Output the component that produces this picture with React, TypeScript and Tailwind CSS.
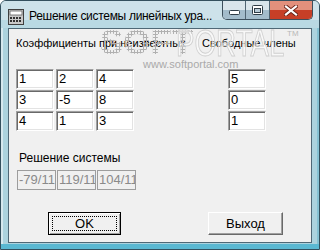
import React from "react";

const coeffs = [
  ["1", "2", "4"],
  ["3", "-5", "8"],
  ["4", "1", "3"],
];
const free = ["5", "0", "1"];
const result = ["-79/115", "119/115", "104/115"];

function Field({ value }: { value: string }) {
  return (
    <div className="h-[20px] w-[38px] overflow-hidden whitespace-nowrap border border-[#a0a0a0] border-b-white border-r-white bg-white pl-[2px] text-[13px] leading-[18px] text-black shadow-[inset_1px_1px_0_#696969,inset_-1px_-1px_0_#e3e3e3]">
      {value}
    </div>
  );
}

function ResultField({ value }: { value: string }) {
  return (
    <div className="h-[20px] w-[39px] overflow-hidden whitespace-nowrap border border-[#9d9d9d] bg-[#f0f0f0] pl-[1px] text-[13px] leading-[18px] text-[#8a8a8a]">
      {value}
    </div>
  );
}

function AppIcon() {
  return (
    <svg width="16" height="16" viewBox="0 0 16 16">
      <rect x="0.5" y="0.5" width="15" height="15" fill="#c8c8c8" stroke="#404040" />
      <rect x="2" y="2" width="12" height="4" fill="#fff" stroke="#606060" strokeWidth="0.8" />
      {[0, 1, 2, 3].map((c) =>
        [0, 1].map((r) => (
          <rect key={`${c}-${r}`} x={2 + c * 3} y={8 + r * 3} width="2" height="2" fill="#303030" />
        ))
      )}
    </svg>
  );
}

// caption button glyphs
function MinGlyph() {
  return (
    <svg width="13" height="12" viewBox="0 0 13 12">
      <rect x="1.5" y="6.5" width="10" height="4" rx="1" fill="#fff" stroke="#2f3d47" />
    </svg>
  );
}

function MaxGlyph() {
  return (
    <svg width="13" height="12" viewBox="0 0 13 12">
      <rect x="1.5" y="1.5" width="10" height="9" rx="1" fill="#fff" stroke="#2f3d47" />
      <rect x="3.5" y="4.5" width="6" height="4" fill="#b7cad6" stroke="#2f3d47" />
    </svg>
  );
}

function CloseX() {
  return (
    <svg width="14" height="11" viewBox="0 0 14 11">
      <path d="M2 1.5 L12 9.5 M12 1.5 L2 9.5" stroke="#6b2418" strokeWidth="4" strokeLinecap="square" />
      <path d="M2 1.5 L12 9.5 M12 1.5 L2 9.5" stroke="#fff" strokeWidth="2.2" strokeLinecap="square" />
    </svg>
  );
}

export default function App() {
  return (
    <div className="flex h-[250px] w-[320px] flex-col overflow-hidden rounded-t-[6px] border border-[#34505e] bg-[#acd3de] font-['Liberation_Sans',Arial,sans-serif] shadow-[inset_0_-5px_0_#5ab8d2,inset_2px_0_0_#d6e8ee,inset_-2px_0_0_#86c2d3]">
      {/* title bar */}
      <div className="flex h-[27px] shrink-0 items-start bg-[#cde2ea] shadow-[inset_0_-8px_0_#b9d9e3]">
        <div className="ml-[7px] mt-[8px] shrink-0">
          <AppIcon />
        </div>
        <div className="ml-[5px] mt-[7px] min-w-0 flex-1 overflow-hidden whitespace-nowrap text-[12px] leading-[16px] tracking-[-0.3px] text-black">
          Решение системы линейных ура...
        </div>
        <div className="mr-[6px] flex h-[19px] shrink-0 overflow-hidden rounded-b-[5px] border border-t-0 border-[#3d4f5c]">
          <div className="flex w-[23px] items-center justify-center border-r border-[#4f6472] bg-[#a3bccb] shadow-[inset_0_9px_0_#d9e5eb]">
            <MinGlyph />
          </div>
          <div className="flex w-[24px] items-center justify-center border-r border-[#4f6472] bg-[#a3bccb] shadow-[inset_0_9px_0_#d9e5eb]">
            <MaxGlyph />
          </div>
          <div className="flex w-[42px] items-center justify-center bg-[#c63f27] shadow-[inset_0_9px_0_#e2907c]">
            <CloseX />
          </div>
        </div>
      </div>

      {/* client area */}
      <div className="relative mx-[7px] mb-[6px] flex flex-1 flex-col border border-[#4f6876] bg-[#f0f0f0] text-[11px] text-black">
        <div className="mt-[8px] flex h-[13px] leading-[13px]">
          <div className="w-[193px] overflow-hidden whitespace-nowrap pl-[7px]">Коэффициенты при неизвестных</div>
          <div className="whitespace-nowrap">Свободные члены</div>
        </div>

        <div className="mt-[19px] flex pl-[7px]">
          <div className="flex flex-col gap-[1px]">
            {coeffs.map((row, i) => (
              <div key={i} className="flex gap-[2px]">
                {row.map((v, j) => (
                  <Field key={j} value={v} />
                ))}
              </div>
            ))}
          </div>
          <div className="ml-[94px] flex flex-col gap-[1px]">
            {free.map((v, i) => (
              <Field key={i} value={v} />
            ))}
          </div>
        </div>

        <div className="mt-[20px] pl-[10px] text-[12px] leading-[14px]">Решение системы</div>

        <div className="mt-[5px] flex gap-[1px] pl-[8px]">
          {result.map((v, i) => (
            <ResultField key={i} value={v} />
          ))}
        </div>

        <div className="mt-[22px] flex pl-[39px]">
          <div className="flex h-[23px] w-[73px] items-center justify-center border border-black bg-[#f0f0f0] p-[3px] shadow-[inset_1px_1px_0_#fff,inset_-1px_-1px_0_#a0a0a0]">
            <div className="flex h-full w-full items-center justify-center border border-dotted border-black text-[13px]">
              OK
            </div>
          </div>
          <div className="ml-[87px] flex h-[23px] w-[75px] items-center justify-center border border-white border-b-[#696969] border-r-[#696969] bg-[#f0f0f0] text-[13px] shadow-[inset_-1px_-1px_0_#a0a0a0]">
            Выход
          </div>
        </div>

        {/* watermark */}
        <div className="pointer-events-none absolute left-[91px] top-[-5px] select-none bg-[radial-gradient(circle,#b0b0b0_50%,transparent_55%)] bg-[length:3px_3px] bg-clip-text text-[35px] font-bold leading-[36px] text-transparent">
          SOFT
        </div>
        <div className="pointer-events-none absolute left-[167px] top-[-3px] origin-left scale-x-[0.75] select-none text-[37px] leading-[36px] text-white/50 [-webkit-text-stroke:1px_#d0d0d0]">
          PORTAL
        </div>
        <div className="pointer-events-none absolute left-[278px] top-[1px] select-none text-[8px] leading-[8px] text-[#b8b8b8]">
          TM
        </div>
        <div className="pointer-events-none absolute left-[134px] top-[29px] select-none text-[11px] leading-[12px] text-[#aaaaaa]">
          www.softportal.com
        </div>
      </div>
    </div>
  );
}
